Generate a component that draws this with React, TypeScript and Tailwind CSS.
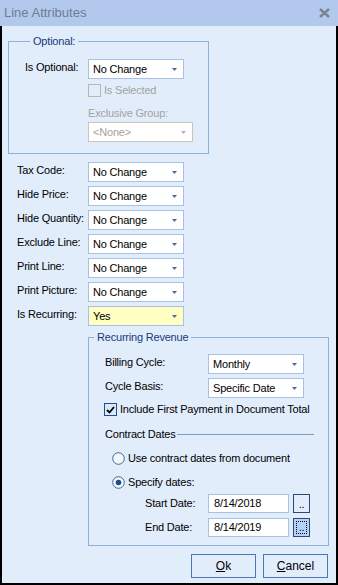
import React from 'react';

const font = { fontFamily: '"Liberation Sans", Arial, sans-serif' };

const Arrow: React.FC<{ color?: string }> = ({ color = '#4a6aa0' }) => (
    <svg width="5" height="3" viewBox="0 0 5 3" className="shrink-0">
        <path d="M0 0H5L2.5 3Z" fill={color} />
    </svg>
);

const Select: React.FC<{ value: string; width?: string; yellow?: boolean; disabled?: boolean }> = ({
    value,
    width = 'w-[96px]',
    yellow,
    disabled,
}) => (
    <div
        className={`${width} h-[20px] shrink-0 flex items-center justify-between pl-[4px] pr-[6px] border ${
            disabled ? 'border-[#c9c5b9] text-[#a3a29c] bg-white' : yellow ? 'border-[#a9c2e3] bg-[#ffffc2] text-black' : 'border-[#a9c2e3] bg-white text-black'
        }`}
    >
        <span className="leading-none">{value}</span>
        <Arrow color={disabled ? '#c9a3c9' : '#4a6aa0'} />
    </div>
);

const Row: React.FC<{ label: string; value: string; yellow?: boolean }> = ({ label, value, yellow }) => (
    <div className="flex items-start h-[20px]">
        <span className="w-[71px] pt-[2px] leading-[13px]">{label}</span>
        <Select value={value} yellow={yellow} />
    </div>
);

const Radio: React.FC<{ checked?: boolean }> = ({ checked }) => (
    <svg width="13" height="13" viewBox="0 0 13 13" className="shrink-0">
        <circle cx="6.5" cy="6.5" r="5.8" fill="#f4f8fd" stroke="#3f6896" strokeWidth="1" />
        {checked && <circle cx="6.5" cy="6.5" r="2.8" fill="#1f4c85" />}
    </svg>
);

export default function App() {
    return (
        <div className="w-[338px] h-[585px] flex flex-col text-[11px] tracking-[-0.2px] text-black" style={font}>
            <div className="h-[26px] shrink-0 bg-[#b2c9ed] flex items-center justify-between pl-[4px] pr-[8px]">
                <span className="text-[13px] tracking-normal text-[#6d7d92]">Line Attributes</span>
                <svg width="11" height="10" viewBox="0 0 11 10">
                    <path d="M1 1L10 9M10 1L1 9" stroke="#7a8593" strokeWidth="2.4" />
                </svg>
            </div>

            <div className="flex-1 flex flex-col bg-[#e2edfc] border-x-2 border-b-2 border-black">
                <fieldset className="mt-[9px] ml-[6px] w-[201px] border border-[#8fb0dd] pl-[16px] pt-[11px] pb-[11px] flex flex-col">
                    <legend className="ml-[5px] px-[3px] leading-[13px] text-[#17397a]">Optional:</legend>
                    <div className="flex items-start">
                        <span className="w-[63px] pt-[2px] leading-[13px]">Is Optional:</span>
                        <Select value="No Change" />
                    </div>
                    <div className="flex items-center mt-[5px] ml-[63px] text-[#a3a29c]">
                        <div className="w-[13px] h-[13px] border border-[#b9b6ab]" />
                        <span className="ml-[3px] leading-[13px]">Is Selected</span>
                    </div>
                    <span className="ml-[63px] mt-[10px] leading-[13px] text-[#a3a29c]">Exclusive Group:</span>
                    <div className="ml-[63px] mt-[2px]">
                        <Select value="<None>" width="w-[105px]" disabled />
                    </div>
                </fieldset>

                <div className="flex flex-col gap-[4px] mt-[8px] pl-[15px]">
                    <Row label="Tax Code:" value="No Change" />
                    <Row label="Hide Price:" value="No Change" />
                    <Row label="Hide Quantity:" value="No Change" />
                    <Row label="Exclude Line:" value="No Change" />
                    <Row label="Print Line:" value="No Change" />
                    <Row label="Print Picture:" value="No Change" />
                    <Row label="Is Recurring:" value="Yes" yellow />
                </div>

                <fieldset className="mt-[5px] ml-[86px] w-[241px] border border-[#8fb0dd] pt-[10px] pb-[8px] flex flex-col">
                    <legend className="ml-[5px] px-[3px] leading-[13px] text-[#17397a]">Recurring Revenue</legend>
                    <div className="flex flex-col gap-[4px] pl-[16px]">
                        <div className="flex items-start">
                            <span className="w-[103px] pt-[2px] leading-[13px]">Billing Cycle:</span>
                            <Select value="Monthly" />
                        </div>
                        <div className="flex items-start">
                            <span className="w-[103px] pt-[2px] leading-[13px]">Cycle Basis:</span>
                            <Select value="Specific Date" />
                        </div>
                    </div>
                    <div className="flex items-center mt-[5px] pl-[15px]">
                        <div className="w-[13px] h-[13px] border border-[#1f4f8d] bg-[#dbe8fa] flex items-center justify-center">
                            <svg width="9" height="8" viewBox="0 0 9 8">
                                <path d="M1 4L3.5 6.5L8 1" stroke="#000" strokeWidth="1.8" fill="none" />
                            </svg>
                        </div>
                        <span className="ml-[3px] leading-[13px]">Include First Payment in Document Total</span>
                    </div>
                    <div className="flex items-center mt-[12px] pl-[16px] pr-[14px]">
                        <span className="leading-[13px]">Contract Dates</span>
                        <div className="flex-1 h-px bg-[#7f9cc4] ml-[1px]" />
                    </div>
                    <div className="flex items-center mt-[11px] pl-[23px]">
                        <Radio />
                        <span className="ml-[3px] leading-[13px]">Use contract dates from document</span>
                    </div>
                    <div className="flex items-center mt-[11px] pl-[23px]">
                        <Radio checked />
                        <span className="ml-[3px] leading-[13px]">Specify dates:</span>
                    </div>
                    <div className="flex flex-col gap-[5px] mt-[5px] pl-[56px]">
                        <div className="flex items-start">
                            <span className="w-[63px] pt-[3px] leading-[13px]">Start Date:</span>
                            <div className="w-[81px] h-[19px] bg-white border border-[#a9c2e3] pl-[5px] flex items-center">8/14/2018</div>
                            <div className="ml-[4px] w-[17px] h-[19px] border border-[#2b4a78] flex items-end justify-center pb-[2px] leading-none">..</div>
                        </div>
                        <div className="flex items-start">
                            <span className="w-[63px] pt-[3px] leading-[13px]">End Date:</span>
                            <div className="w-[81px] h-[19px] bg-white border border-[#a9c2e3] pl-[5px] flex items-center">8/14/2019</div>
                            <div className="ml-[4px] w-[17px] h-[19px] border border-[#2b4a78] bg-[#b5d3f7] p-[2px]">
                                <div className="w-full h-full border border-dotted border-black flex items-end justify-center leading-none">..</div>
                            </div>
                        </div>
                    </div>
                </fieldset>

                <div className="flex justify-end gap-[7px] mt-[8px] pr-[8px]">
                    <button className="w-[65px] h-[24px] border border-[#4a79b6] bg-[#e2edfc] text-[12px] tracking-normal">
                        <span className="underline">O</span>k
                    </button>
                    <button className="w-[65px] h-[24px] border border-[#4a79b6] bg-[#e2edfc] text-[12px] tracking-normal">
                        <span className="underline">C</span>ancel
                    </button>
                </div>
            </div>
        </div>
    );
}
